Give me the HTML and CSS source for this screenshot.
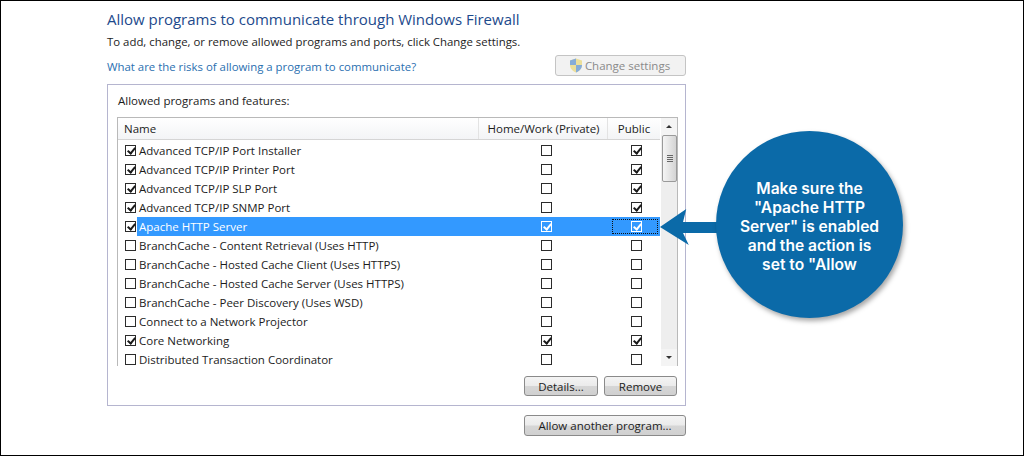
FILE: index.html
```html
<!DOCTYPE html>
<html lang="en">
<head>
<meta charset="utf-8">
<title>Allow programs</title>
<link rel="stylesheet" href="styles.css">
</head>
<body>
<div class="frame">
  <main class="main">
    <h1 class="title">Allow programs to communicate through Windows Firewall</h1>
    <p class="intro">To add, change, or remove allowed programs and ports, click Change settings.</p>
    <div class="link-row">
      <a class="link">What are the risks of allowing a program to communicate?</a>
      <button class="btn btn-settings" disabled>
        <svg class="shield" viewBox="0 0 14 15" width="14" height="15"><path d="M7 .5 13 2.500V7c0 3.500-2.600 6-6 7.500C3.600 13 1 10.500 1 7V2.500Z" fill="#ecdf9a"/><path d="M7 .5V7H1V2.500ZM7 7h6c0 3.500-2.600 6-6 7.500Z" fill="#86acd8"/></svg>
        Change settings</button>
    </div>
    <section class="panel">
      <div class="panel-label">Allowed programs and features:</div>
      <div class="list">
        <div class="table">
          <div class="head">
            <div class="col-name">Name</div>
            <div class="col-home">Home/Work (Private)</div>
            <div class="col-public">Public</div>
          </div>
          <div class="row"><span class="cb on"></span><span class="rname">Advanced TCP/IP Port Installer</span><span class="cell"><span class="cb"></span></span><span class="cell pub"><span class="cb on"></span></span></div>
          <div class="row"><span class="cb on"></span><span class="rname">Advanced TCP/IP Printer Port</span><span class="cell"><span class="cb"></span></span><span class="cell pub"><span class="cb on"></span></span></div>
          <div class="row"><span class="cb on"></span><span class="rname">Advanced TCP/IP SLP Port</span><span class="cell"><span class="cb"></span></span><span class="cell pub"><span class="cb on"></span></span></div>
          <div class="row"><span class="cb on"></span><span class="rname">Advanced TCP/IP SNMP Port</span><span class="cell"><span class="cb"></span></span><span class="cell pub"><span class="cb on"></span></span></div>
          <div class="row selected"><span class="cb on"></span><span class="rname">Apache HTTP Server</span><span class="cell"><span class="cb on"></span></span><span class="cell pub focus"><span class="cb on"></span></span></div>
          <div class="row"><span class="cb"></span><span class="rname">BranchCache - Content Retrieval (Uses HTTP)</span><span class="cell"><span class="cb"></span></span><span class="cell pub"><span class="cb"></span></span></div>
          <div class="row"><span class="cb"></span><span class="rname">BranchCache - Hosted Cache Client (Uses HTTPS)</span><span class="cell"><span class="cb"></span></span><span class="cell pub"><span class="cb"></span></span></div>
          <div class="row"><span class="cb"></span><span class="rname">BranchCache - Hosted Cache Server (Uses HTTPS)</span><span class="cell"><span class="cb"></span></span><span class="cell pub"><span class="cb"></span></span></div>
          <div class="row"><span class="cb"></span><span class="rname">BranchCache - Peer Discovery (Uses WSD)</span><span class="cell"><span class="cb"></span></span><span class="cell pub"><span class="cb"></span></span></div>
          <div class="row"><span class="cb"></span><span class="rname">Connect to a Network Projector</span><span class="cell"><span class="cb"></span></span><span class="cell pub"><span class="cb"></span></span></div>
          <div class="row"><span class="cb on"></span><span class="rname">Core Networking</span><span class="cell"><span class="cb on"></span></span><span class="cell pub"><span class="cb on"></span></span></div>
          <div class="row"><span class="cb"></span><span class="rname">Distributed Transaction Coordinator</span><span class="cell"><span class="cb"></span></span><span class="cell pub"><span class="cb"></span></span></div>
        </div>
        <div class="scrollbar">
          <div class="arrow up"></div>
          <div class="thumb"><span class="grip"></span></div>
          <div class="track"></div>
          <div class="arrow down"></div>
        </div>
      </div>
      <div class="panel-actions">
        <button class="btn btn-details">Details...</button>
        <button class="btn btn-remove">Remove</button>
      </div>
    </section>
    <div class="bottom-actions">
      <button class="btn btn-allow">Allow another program...</button>
    </div>
  </main>
  <aside class="callout">
    <div class="arrow-tip"></div>
    <div class="bubble">Make sure the<br>"Apache HTTP<br>Server" is enabled<br>and the action is<br>set to "Allow</div>
  </aside>
</div>
</body>
</html>
```
FILE: styles.css
```css
* { box-sizing: border-box; }
html, body { margin: 0; padding: 0; background: #fff; }
.frame {
  position: relative;
  width: 1024px;
  height: 456px;
  border: 1px solid #000;
  overflow: hidden;
  font-family: "Open Sans", "Noto Sans", sans-serif;
  font-size: 11.5px;
  color: #1c1c1c;
}
.main { width: 579px; margin-left: 106px; }
.title {
  margin: 9px 0 0;
  font-size: 15px;
  line-height: 18px;
  font-weight: 400;
  color: #1d4a8c;
}
.intro { margin: 6px 0 0; line-height: 16px; font-size: 11.4px; }
.link-row {
  display: flex;
  justify-content: space-between;
  align-items: flex-start;
  margin-top: 5px;
  height: 22px;
}
.link { color: #2a6fb0; line-height: 22px; padding-top: 1px; font-size: 11.4px; }
.btn {
  font-family: inherit;
  font-size: 11.5px;
  color: #1c1c1c;
  height: 21px;
  padding: 0;
  border: 1px solid #8a8a8a;
  border-radius: 3px;
  background: linear-gradient(#f4f4f4 0%, #ebebeb 48%, #d6d6d6 52%, #d0d0d0 100%);
}
.btn-settings {
  display: flex;
  align-items: center;
  justify-content: center;
  gap: 2px;
  width: 131px;
  color: #8a8a8a;
  border-color: #c4c4c4;
  background: #f2f2f2;
}
.shield { margin-left: -2px; }
.panel {
  margin-top: 7px;
  height: 322px;
  border: 1px solid #b5b5cf;
  padding: 0 7px 0 9px;
}
.panel-label { height: 32px; padding: 8px 1px 0; line-height: 16px; }
.list {
  display: flex;
  height: 249px;
  border: 1px solid #b9b9b9;
  border-bottom: 0;
  overflow: hidden;
}
.table { flex: 1; min-width: 0; }
.head {
  display: flex;
  height: 22px;
  margin-bottom: 1px;
  line-height: 21px;
  background: linear-gradient(#fff, #f3f4f6);
  border-bottom: 1px solid #d5d5d5;
}
.col-name { width: 361px; padding-left: 6px; border-right: 1px solid #e3e3e3; }
.col-home { width: 129px; padding-left: 1px; text-align: center; border-right: 1px solid #e3e3e3; }
.col-public { flex: 1; text-align: center; }
.row {
  display: flex;
  align-items: center;
  height: 19px;
  padding-left: 7px;
}
.rname { margin-left: 3px; flex: 0 0 362px; line-height: 19px; white-space: nowrap; }
.cell { flex: 0 0 90px; display: flex; justify-content: center; }
.cell.pub { flex: 0 0 48px; margin-left: 21px; }
.cb {
  display: block;
  position: relative;
  width: 11px;
  height: 11px;
  border: 1px solid #2b2b2b;
  background: #fff;
  flex: none;
}
.cb.on::after {
  content: "";
  position: absolute;
  left: 3px;
  top: 0;
  width: 3px;
  height: 6px;
  border: solid #1a1a1a;
  border-width: 0 2px 2px 0;
  transform: rotate(40deg);
}
.selected { background: linear-gradient(90deg, transparent 19px, #3399ff 19px); }
.selected .rname { color: #fff; }
.selected .cell { height: 19px; align-items: center; }
.selected .cell .cb { border-color: #fff; background: #3399ff; }
.selected .cell .cb.on::after { border-color: #fff; }
.selected .cell.focus {
  border: 1px dotted #111;
  height: 15px;
  flex: 0 0 46px;
  margin-left: 21px;
  padding-left: 2px;
}
.scrollbar {
  width: 17px;
  flex: none;
  display: flex;
  flex-direction: column;
  background: #eeeeee;
  border-left: 1px solid #fff;
}
.arrow { height: 17px; position: relative; background: #f4f4f4; }
.arrow::after {
  content: "";
  position: absolute;
  left: 5px;
  border-left: 3px solid transparent;
  border-right: 3px solid transparent;
}
.arrow.up::after { top: 7px; border-bottom: 3px solid #333; }
.arrow.down::after { top: 7px; border-top: 3px solid #333; }
.thumb {
  height: 47px;
  margin: 0 0 0 1px;
  border: 1px solid #9a9a9a;
  border-radius: 2px;
  background: linear-gradient(90deg, #f5f5f5, #d4d4d4);
  display: flex;
  align-items: center;
  justify-content: center;
}
.grip {
  width: 6px;
  height: 7px;
  background: repeating-linear-gradient(#666 0 1px, transparent 1px 2px);
}
.track { flex: 1; }
.panel-actions { display: flex; justify-content: flex-end; gap: 6px; margin: 10px 1px 0 0; }
.panel-actions .btn { height: 20px; }
.btn-details { width: 74px; }
.btn-remove { width: 73px; }
.bottom-actions { display: flex; justify-content: flex-end; margin-top: 9px; }
.btn-allow { width: 162px; }
.callout { position: absolute; left: 659px; top: 130px; width: 320px; height: 190px; }
.arrow-tip {
  position: absolute;
  left: 0;
  top: 78px;
  width: 64px;
  height: 36px;
  background: #0b6aa8;
  clip-path: polygon(0 50%, 41% 0, 36% 36%, 100% 36%, 100% 67%, 36% 67%, 45% 100%);
}
.bubble {
  position: absolute;
  left: 56px;
  top: 0;
  width: 187px;
  height: 187px;
  border-radius: 50%;
  background: #0b6aa8;
  box-shadow: 2px 3px 5px rgba(0,0,0,.35);
  color: #fff;
  font-family: "Inter", "Open Sans", sans-serif;
  font-weight: 600;
  font-size: 15.6px;
  line-height: 19px;
  padding-top: 4px;
  text-align: center;
  display: flex;
  align-items: center;
  justify-content: center;
}
```
